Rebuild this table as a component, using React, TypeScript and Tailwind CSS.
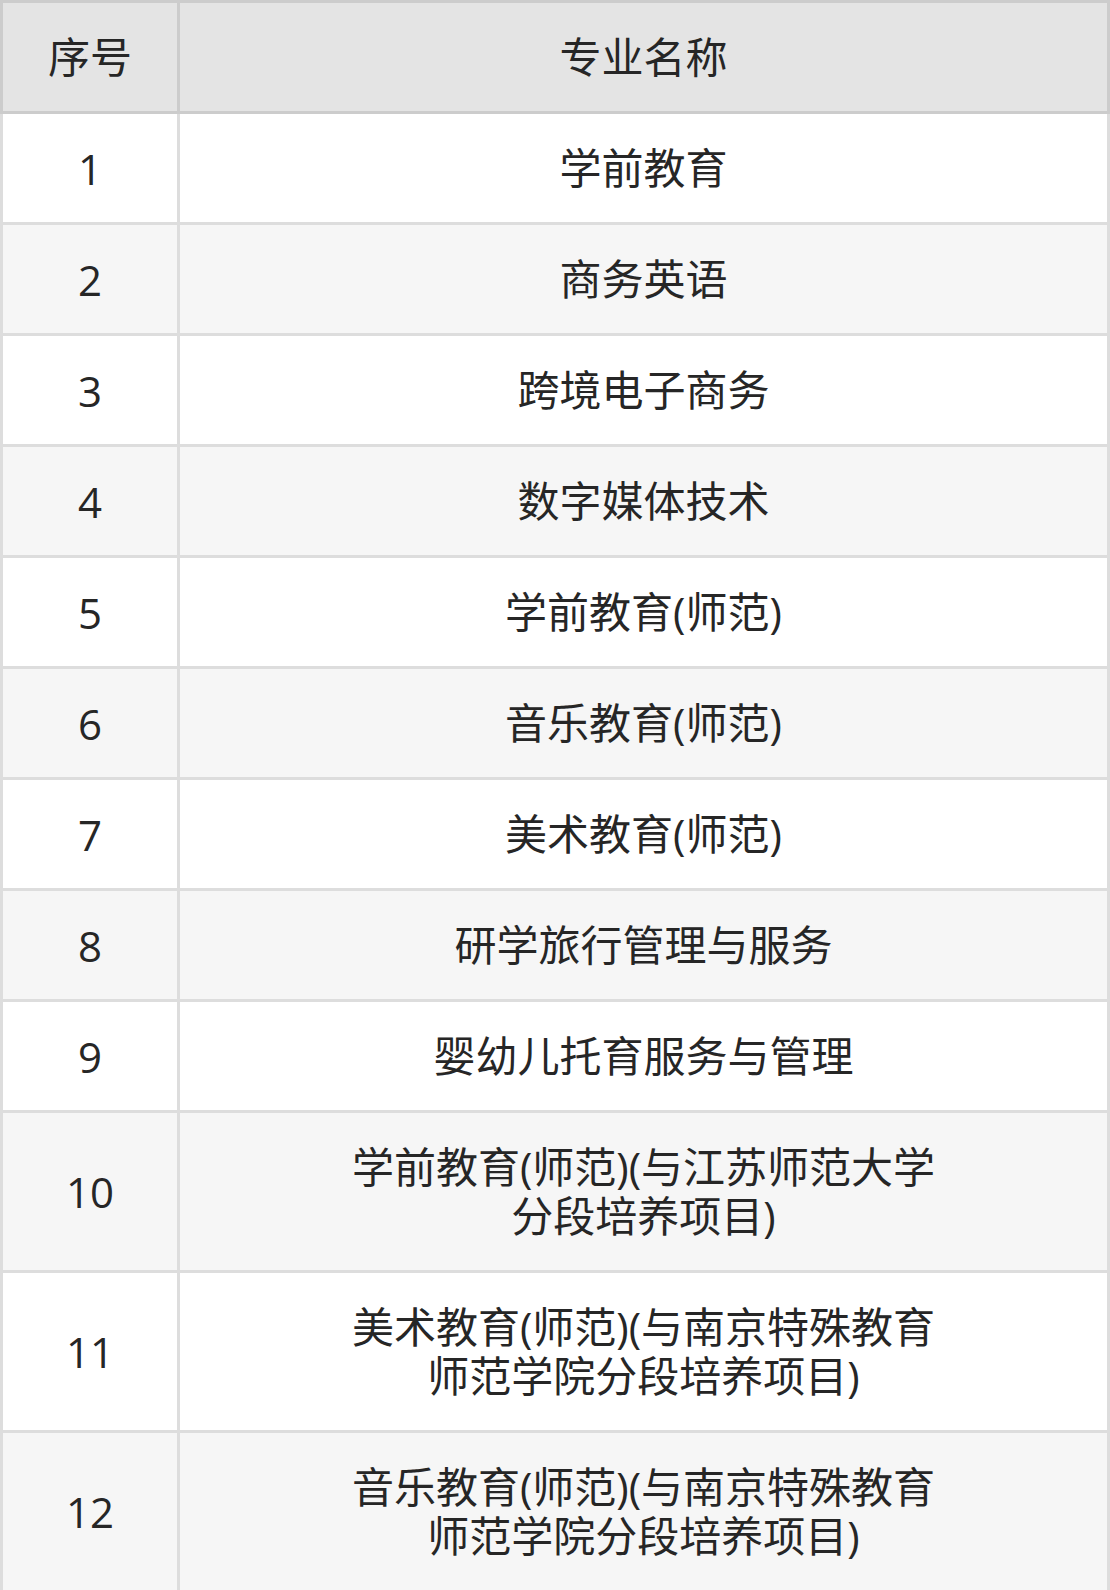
import React from 'react';

const majors: string[] = [
  '学前教育',
  '商务英语',
  '跨境电子商务',
  '数字媒体技术',
  '学前教育(师范)',
  '音乐教育(师范)',
  '美术教育(师范)',
  '研学旅行管理与服务',
  '婴幼儿托育服务与管理',
  '学前教育(师范)(与江苏师范大学\n分段培养项目)',
  '美术教育(师范)(与南京特殊教育\n师范学院分段培养项目)',
  '音乐教育(师范)(与南京特殊教育\n师范学院分段培养项目)',
];

const App = () => {
  return (
    <div className="w-[1110px] bg-white text-[#262626] text-[42px] leading-[49px] font-['Open_Sans','Noto_Sans_CJK_SC',sans-serif]">
      {/* header */}
      <div className="flex bg-[#e4e4e4] border-t-[3px] border-r-[3px] border-b-[3px] border-[#cccccc]">
        <div className="w-[177px] shrink-0 border-l-[3px] border-[#cccccc] pt-[29px] pb-[30px] text-center">序号</div>
        <div className="flex-1 border-l-[3px] border-[#cccccc] pt-[29px] pb-[30px] text-center">专业名称</div>
      </div>

      {majors.map((name, i) => (
        <div
          key={i}
          className={`flex border-r-[3px] border-b-[3px] border-[#dddddd] ${i % 2 === 1 ? 'bg-[#f6f6f6]' : 'bg-white'}`}
        >
          <div className="w-[177px] shrink-0 border-l-[3px] border-[#dddddd] flex items-center justify-center">
            {i + 1}
          </div>
          <div className="flex-1 border-l-[3px] border-[#dddddd] pt-[29px] pb-[30px] text-center whitespace-pre-line">
            {name}
          </div>
        </div>
      ))}
    </div>
  );
};

export default App;
